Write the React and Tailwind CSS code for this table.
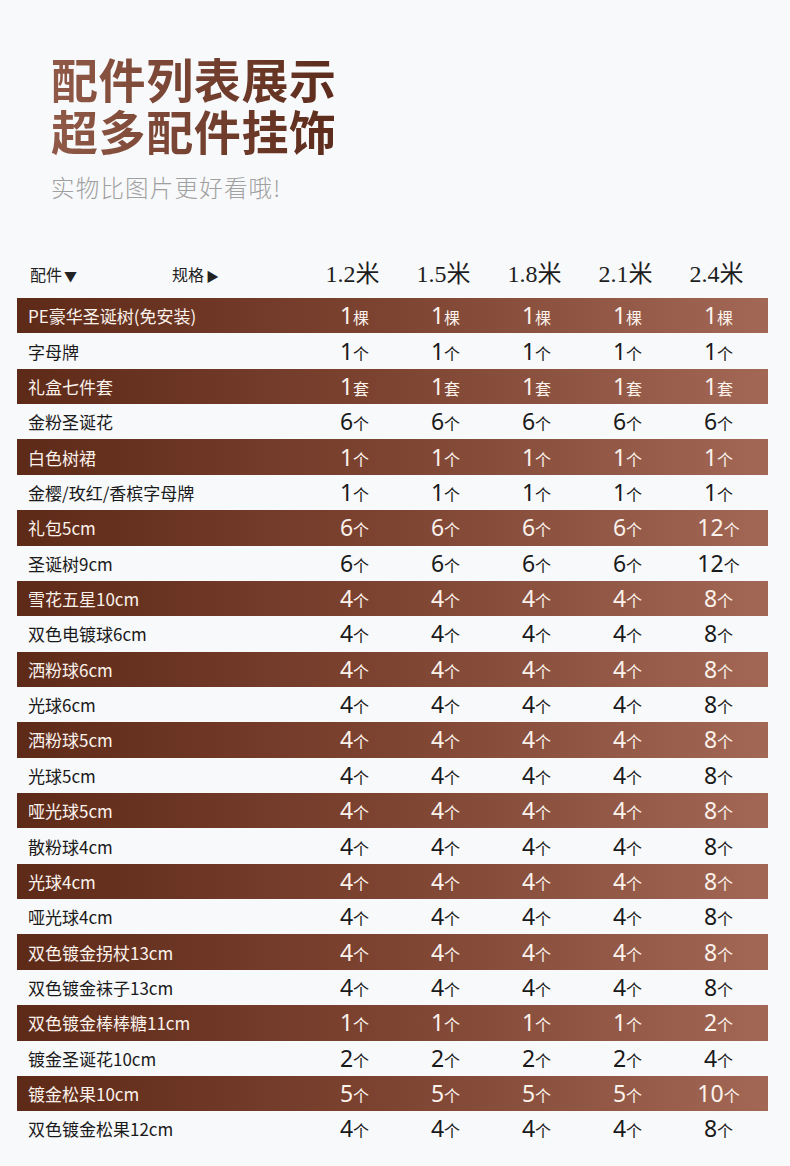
import React from 'react';

const SIZES = ['1.2米', '1.5米', '1.8米', '2.1米', '2.4米'];

const ROWS = [
  ['PE豪华圣诞树(免安装)', [1, 1, 1, 1, 1], '棵'],
  ['字母牌', [1, 1, 1, 1, 1], '个'],
  ['礼盒七件套', [1, 1, 1, 1, 1], '套'],
  ['金粉圣诞花', [6, 6, 6, 6, 6], '个'],
  ['白色树裙', [1, 1, 1, 1, 1], '个'],
  ['金樱/玫红/香槟字母牌', [1, 1, 1, 1, 1], '个'],
  ['礼包5cm', [6, 6, 6, 6, 12], '个'],
  ['圣诞树9cm', [6, 6, 6, 6, 12], '个'],
  ['雪花五星10cm', [4, 4, 4, 4, 8], '个'],
  ['双色电镀球6cm', [4, 4, 4, 4, 8], '个'],
  ['洒粉球6cm', [4, 4, 4, 4, 8], '个'],
  ['光球6cm', [4, 4, 4, 4, 8], '个'],
  ['洒粉球5cm', [4, 4, 4, 4, 8], '个'],
  ['光球5cm', [4, 4, 4, 4, 8], '个'],
  ['哑光球5cm', [4, 4, 4, 4, 8], '个'],
  ['散粉球4cm', [4, 4, 4, 4, 8], '个'],
  ['光球4cm', [4, 4, 4, 4, 8], '个'],
  ['哑光球4cm', [4, 4, 4, 4, 8], '个'],
  ['双色镀金拐杖13cm', [4, 4, 4, 4, 8], '个'],
  ['双色镀金袜子13cm', [4, 4, 4, 4, 8], '个'],
  ['双色镀金棒棒糖11cm', [1, 1, 1, 1, 2], '个'],
  ['镀金圣诞花10cm', [2, 2, 2, 2, 4], '个'],
  ['镀金松果10cm', [5, 5, 5, 5, 10], '个'],
  ['双色镀金松果12cm', [4, 4, 4, 4, 8], '个'],
];

const cjk = "font-['Noto_Sans_CJK_SC',sans-serif]";

const App = () => {
  return (
    <div className={`w-[790px] h-[1166px] bg-[#f8f9fb] overflow-hidden ${cjk}`}>
      {/* title */}
      <div className="pl-[51px] pt-[52px]">
        <div className="w-fit font-bold text-[47px] tracking-[0.6px] bg-gradient-to-r from-[#915a48] to-[#5c2b1b] bg-clip-text text-transparent">
          <div className="h-[52px] leading-[52px]">配件列表展示</div>
          <div className="h-[52px] leading-[52px]">超多配件挂饰</div>
        </div>
        <p className="mt-[16px] font-light text-[23.5px] leading-[30px] text-[#a0a0a0] tracking-[1.2px]">
          实物比图片更好看哦!
        </p>
      </div>

      {/* table */}
      <div className="mt-[48px] pl-[17px]">
        <div className="flex items-center h-[48px] w-[751px]">
          <div className="w-[292px] flex items-center pl-[13px] text-[16px] text-[#222]">
            <span className="w-[142px]">
              配件<span className="text-[13px] ml-[2px]">▼</span>
            </span>
            <span>
              规格<span className="text-[13px] ml-[2px]">▶</span>
            </span>
          </div>
          {SIZES.map((s) => (
            <div
              key={s}
              className="w-[91px] text-center text-[24px] text-[#1e1e1e] font-['Liberation_Serif','Noto_Sans_CJK_SC',serif] -translate-x-[2px]"
            >
              {s}
            </div>
          ))}
        </div>

        {ROWS.map(([name, vals, unit], i) => {
          const dark = i % 2 === 0;
          return (
            <div
              key={name}
              className={`flex items-center h-[35.36px] w-[751px] ${
                dark
                  ? 'bg-gradient-to-r from-[#5e2a18] via-[#7e4432] to-[#a26855] text-[#fbf2ec]'
                  : 'text-[#1a1a1a]'
              }`}
            >
              <div className="w-[292px] pl-[11px] text-[17px] leading-none">{name}</div>
              {vals.map((v, j) => (
                <div key={j} className="w-[91px] flex items-baseline justify-center leading-none">
                  <span className="text-[23px] font-['Noto_Sans',sans-serif]">{v}</span>
                  <span className="text-[16px]">{unit}</span>
                </div>
              ))}
            </div>
          );
        })}
      </div>
    </div>
  );
};

export default App;
